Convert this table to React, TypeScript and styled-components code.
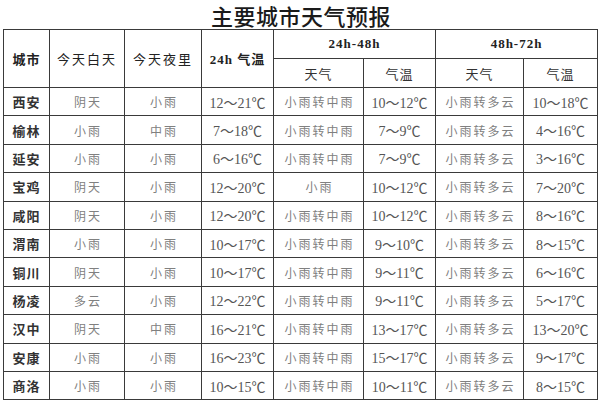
import React from "react"
import styled, { createGlobalStyle } from "styled-components"

const GlobalStyle = createGlobalStyle`
  html, body {
    margin: 0;
    padding: 0;
    background: #fff;
  }
  body {
    font-family: "Liberation Serif", "Noto Sans CJK SC", serif;
  }
`

const Page = styled.div`
  width: 600px;
  height: 402px;
  overflow: hidden;
  background: #fff;
`

const Title = styled.h1`
  margin: 0;
  height: 29px;
  line-height: 30px;
  text-align: center;
  font-family: "Noto Sans CJK SC", sans-serif;
  font-size: 22px;
  font-weight: 500;
  color: #1a1a1a;
  letter-spacing: 0.5px;
  padding-left: 2px;
`

const Table = styled.table`
  margin-left: 3px;
  width: 594px;
  border-collapse: collapse;
  table-layout: fixed;
`

const HeadCell = styled.th<{ $tall?: boolean; $light?: boolean }>`
  border: 1px solid #3a3a3a;
  height: ${p => (p.$tall ? 57 : 28)}px;
  padding: 0;
  text-align: center;
  font-family: "Liberation Serif", "Noto Sans CJK SC", serif;
  font-size: 13px;
  font-weight: ${p => (p.$light ? 400 : 700)};
  color: #222;
  letter-spacing: ${p => (p.$light ? 2 : 1)}px;
`

const SubHead = styled(HeadCell)`
  font-weight: 400;
  color: #333;
`

const Row = styled.tr`
  height: 28.4px;
`

const City = styled.td`
  border: 1px solid #3a3a3a;
  padding: 0;
  text-align: center;
  font-family: "Noto Sans CJK SC", serif;
  font-size: 13px;
  font-weight: 700;
  color: #333;
  letter-spacing: 1px;
`

const Weather = styled.td`
  border: 1px solid #3a3a3a;
  padding: 0 0 0 2px;
  text-align: center;
  font-family: "Noto Sans CJK SC", serif;
  font-size: 12px;
  font-weight: 400;
  color: #808080;
  letter-spacing: 2px;
`

const Temp = styled.td`
  border: 1px solid #3a3a3a;
  padding: 0;
  text-align: center;
  font-family: "Liberation Serif", "Noto Sans CJK SC", serif;
  font-size: 14px;
  color: #555;
`

const widths = [46, 75, 77, 72, 90, 72, 88, 74]

const rows = [
  ["西安", "阴天", "小雨", "12～21℃", "小雨转中雨", "10～12℃", "小雨转多云", "10～18℃"],
  ["榆林", "小雨", "中雨", "7～18℃", "小雨转中雨", "7～9℃", "小雨转多云", "4～16℃"],
  ["延安", "小雨", "小雨", "6～16℃", "小雨转中雨", "7～9℃", "小雨转多云", "3～16℃"],
  ["宝鸡", "阴天", "小雨", "12～20℃", "小雨", "10～12℃", "小雨转多云", "7～20℃"],
  ["咸阳", "阴天", "小雨", "12～20℃", "小雨转中雨", "10～12℃", "小雨转多云", "8～16℃"],
  ["渭南", "小雨", "小雨", "10～17℃", "小雨转中雨", "9～10℃", "小雨转多云", "8～15℃"],
  ["铜川", "阴天", "小雨", "10～17℃", "小雨转中雨", "9～11℃", "小雨转多云", "6～16℃"],
  ["杨凌", "多云", "小雨", "12～22℃", "小雨转中雨", "9～11℃", "小雨转多云", "5～17℃"],
  ["汉中", "阴天", "中雨", "16～21℃", "小雨转中雨", "13～17℃", "小雨转多云", "13～20℃"],
  ["安康", "小雨", "小雨", "16～23℃", "小雨转中雨", "15～17℃", "小雨转多云", "9～17℃"],
  ["商洛", "小雨", "小雨", "10～15℃", "小雨转中雨", "10～11℃", "小雨转多云", "8～15℃"],
]

const App = (): React.ReactElement => {
  return (
    <Page>
      <GlobalStyle />
      <Title>主要城市天气预报</Title>
      <Table>
        <colgroup>
          {widths.map((w, i) => (
            <col key={i} style={{ width: w }} />
          ))}
        </colgroup>
        <thead>
          <tr>
            <HeadCell rowSpan={2} $tall>城市</HeadCell>
            <HeadCell rowSpan={2} $tall $light>今天白天</HeadCell>
            <HeadCell rowSpan={2} $tall $light>今天夜里</HeadCell>
            <HeadCell rowSpan={2} $tall>24h 气温</HeadCell>
            <HeadCell colSpan={2}>24h-48h</HeadCell>
            <HeadCell colSpan={2}>48h-72h</HeadCell>
          </tr>
          <tr>
            <SubHead>天气</SubHead>
            <SubHead>气温</SubHead>
            <SubHead>天气</SubHead>
            <SubHead>气温</SubHead>
          </tr>
        </thead>
        <tbody>
          {rows.map(r => (
            <Row key={r[0]}>
              <City>{r[0]}</City>
              <Weather>{r[1]}</Weather>
              <Weather>{r[2]}</Weather>
              <Temp>{r[3]}</Temp>
              <Weather>{r[4]}</Weather>
              <Temp>{r[5]}</Temp>
              <Weather>{r[6]}</Weather>
              <Temp>{r[7]}</Temp>
            </Row>
          ))}
        </tbody>
      </Table>
    </Page>
  )
}

export default App
